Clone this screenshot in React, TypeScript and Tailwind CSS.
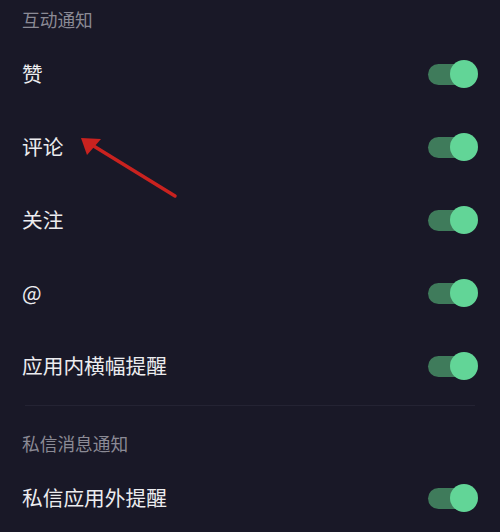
import type { ReactNode } from "react";

const font = { fontFamily: '"Noto Sans CJK SC", "Noto Sans", sans-serif' };

function Toggle() {
  return (
    <div className="relative h-[28px] w-[50px] shrink-0">
      <div className="absolute left-0 top-[4px] h-[21px] w-[44px] rounded-full bg-[#3f7b5b]" />
      <div className="absolute right-0 top-0 h-[28px] w-[28px] rounded-full bg-[#62d597]" />
    </div>
  );
}

function Row({ children }: { children: ReactNode }) {
  return (
    <div className="flex h-[73px] items-center justify-between pl-[22px] pr-[22px]">
      <span className="text-[20.7px] leading-none text-[#ececef]">{children}</span>
      <Toggle />
    </div>
  );
}

function Arrow() {
  return (
    <svg className="pointer-events-none absolute left-0 top-0" width="500" height="532">
      <line x1="175" y1="196" x2="92" y2="145" stroke="#c9221f" strokeWidth="3.5" strokeLinecap="round" />
      <polygon points="81,138 101,139 87,155" fill="#c9221f" />
    </svg>
  );
}

export default function App() {
  return (
    <div className="relative h-[532px] w-[500px] overflow-hidden bg-[#191827]" style={font}>
      <div className="flex h-[37px] items-center pl-[22px] pt-[3px] text-[17.7px] leading-none text-[#8b8a95]">
        互动通知
      </div>
      <Row>赞</Row>
      <Row>评论</Row>
      <Row>关注</Row>
      <Row>@</Row>
      <Row>应用内横幅提醒</Row>
      <div className="mx-[25px] mt-[3px] h-px bg-[#242333]" />
      <div className="flex h-[55px] items-end pb-[8px] pl-[22px] text-[17.7px] leading-none text-[#8b8a95]">
        私信消息通知
      </div>
      <Row>私信应用外提醒</Row>
      <Arrow />
    </div>
  );
}
